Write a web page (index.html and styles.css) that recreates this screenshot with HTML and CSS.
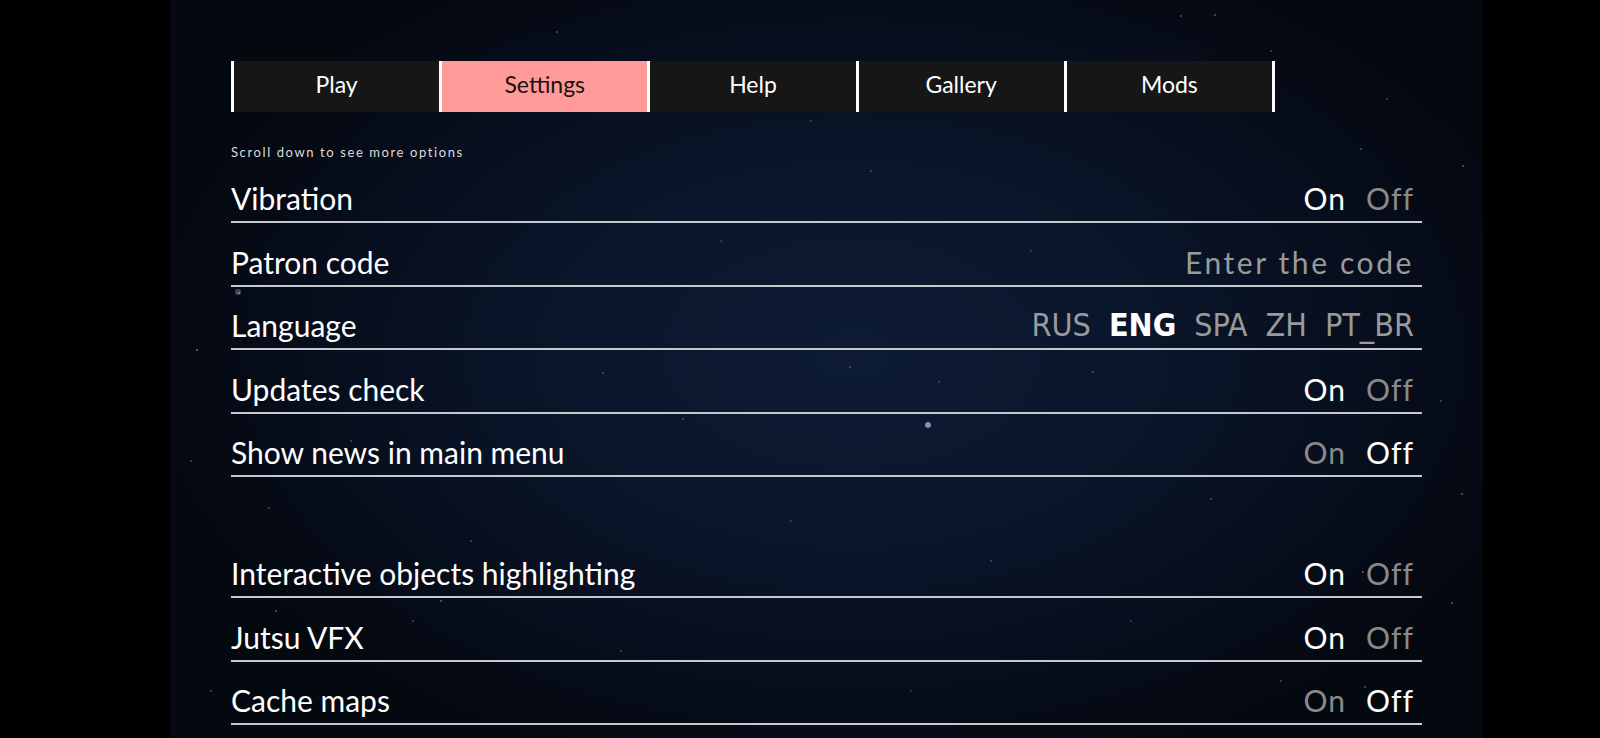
FILE: index.html
```html
<!DOCTYPE html>
<html>
<head>
    <title>Settings</title>
    <link rel="stylesheet" href="styles.css">
</head>
<body>
    <div class="panel">
        <div class="stars"></div>
        <div class="stars big"></div>

        <div class="content">
            <nav class="tabs">
                <div class="tab">Play</div>
                <div class="tab active">Settings</div>
                <div class="tab">Help</div>
                <div class="tab">Gallery</div>
                <div class="tab last">Mods</div>
            </nav>

            <p class="hint">Scroll down to see more options</p>

            <div class="row">
                <span class="label">Vibration</span>
                <span class="value"><span class="on">On</span><span class="off">Off</span></span>
            </div>
            <div class="row">
                <span class="label">Patron code</span>
                <span class="value"><span class="placeholder">Enter the code</span></span>
            </div>
            <div class="row">
                <span class="label">Language</span>
                <span class="value langs">
                    <span>RUS</span>
                    <span class="current">ENG</span>
                    <span>SPA</span>
                    <span>ZH</span>
                    <span>PT_BR</span>
                </span>
            </div>
            <div class="row">
                <span class="label">Updates check</span>
                <span class="value"><span class="on">On</span><span class="off">Off</span></span>
            </div>
            <div class="row">
                <span class="label">Show news in main menu</span>
                <span class="value"><span class="off">On</span><span class="on">Off</span></span>
            </div>

            <div class="spacer"></div>

            <div class="row">
                <span class="label">Interactive objects highlighting</span>
                <span class="value"><span class="on">On</span><span class="off">Off</span></span>
            </div>
            <div class="row">
                <span class="label">Jutsu VFX</span>
                <span class="value"><span class="on">On</span><span class="off">Off</span></span>
            </div>
            <div class="row">
                <span class="label">Cache maps</span>
                <span class="value"><span class="off">On</span><span class="on">Off</span></span>
            </div>
        </div>
    </div>
</body>
</html>
```

FILE: styles.css
```css
body {
    margin: 0;
    padding: 0;
    background-color: #000;
    font-family: Lato, "Noto Sans", sans-serif;
    color: #fff;
    height: 738px;
    overflow: hidden;
}

.panel {
    position: relative;
    margin-left: 170px;
    width: 1313px;
    height: 738px;
    overflow: hidden;
    background:
        radial-gradient(ellipse 55% 60% at 52% 48%, #0d1b33 0%, #0a152a 45%, #060c19 80%, #04080f 100%);
}

/* decorative star dust */
.stars {
    position: absolute;
    left: 0;
    top: 0;
    width: 2px;
    height: 2px;
    border-radius: 50%;
    background: transparent;
    box-shadow:
        68px 292px 0 0 rgba(200,210,230,0.55),
        26px 349px 0 0 rgba(200,210,230,0.5),
        386px 31px 0 0 rgba(200,210,230,0.35),
        1044px 14px 0 0 rgba(200,210,230,0.4),
        1010px 15px 0 0 rgba(200,210,230,0.35),
        1190px 148px 0 0 rgba(200,210,230,0.35),
        1292px 165px 0 0 rgba(200,210,230,0.4),
        1216px 98px 0 0 rgba(200,210,230,0.3),
        98px 507px 0 0 rgba(200,210,230,0.35),
        1291px 493px 0 0 rgba(200,210,230,0.45),
        1040px 498px 0 0 rgba(200,210,230,0.35),
        512px 418px 0 0 rgba(200,210,230,0.3),
        432px 372px 0 0 rgba(200,210,230,0.3),
        679px 366px 0 0 rgba(200,210,230,0.35),
        768px 381px 0 0 rgba(200,210,230,0.3),
        922px 371px 0 0 rgba(200,210,230,0.35),
        270px 600px 0 0 rgba(200,210,230,0.45),
        105px 610px 0 0 rgba(200,210,230,0.4),
        242px 620px 0 0 rgba(200,210,230,0.3),
        1192px 571px 0 0 rgba(200,210,230,0.45),
        1281px 602px 0 0 rgba(200,210,230,0.4),
        1194px 686px 0 0 rgba(200,210,230,0.4),
        700px 170px 0 0 rgba(200,210,230,0.3),
        550px 240px 0 0 rgba(200,210,230,0.25),
        860px 250px 0 0 rgba(200,210,230,0.25),
        300px 540px 0 0 rgba(200,210,230,0.3),
        620px 520px 0 0 rgba(200,210,230,0.25),
        820px 560px 0 0 rgba(200,210,230,0.3),
        960px 620px 0 0 rgba(200,210,230,0.25),
        450px 650px 0 0 rgba(200,210,230,0.3),
        740px 690px 0 0 rgba(200,210,230,0.25),
        1110px 680px 0 0 rgba(200,210,230,0.3),
        180px 440px 0 0 rgba(200,210,230,0.3),
        1160px 320px 0 0 rgba(200,210,230,0.3),
        40px 690px 0 0 rgba(200,210,230,0.35),
        20px 460px 0 0 rgba(200,210,230,0.3),
        1270px 400px 0 0 rgba(200,210,230,0.3),
        640px 120px 0 0 rgba(200,210,230,0.25),
        1100px 50px 0 0 rgba(200,210,230,0.3);
}

.stars.big {
    width: 6px;
    height: 6px;
    box-shadow:
        755px 422px 0 0 rgba(170,185,205,0.75),
        65px 289px 0 0 rgba(170,185,205,0.35);
}

.content {
    position: relative;
    padding-left: 61px;
    width: 1191px;
}

.tabs {
    display: flex;
    margin-top: 61px;
    height: 51px;
}

.tab {
    flex: 0 0 208.2px;
    box-sizing: border-box;
    border-left: 3px solid #fff;
    background-color: #161616;
    display: flex;
    align-items: center;
    justify-content: center;
    padding-bottom: 5px;
    font-size: 23px;
    color: #fff;
}

.tab.last {
    flex-basis: 211.2px;
    border-right: 3px solid #fff;
}

.tab.active {
    background-color: #ff9a98;
    color: #1b1111;
}

.hint {
    margin: 32px 0 0 0;
    height: 16px;
    line-height: 16px;
    font-size: 13px;
    letter-spacing: 1.6px;
    color: #dcdcdc;
}

.row {
    display: flex;
    justify-content: space-between;
    align-items: flex-end;
    box-sizing: border-box;
    height: 63.4px;
    padding: 0 8px 5px 0;
    border-bottom: 2px solid #c4c8cf;
}

.label {
    font-size: 30px;
    line-height: 36px;
}

.value {
    font-size: 30px;
    line-height: 36px;
    letter-spacing: 1px;
    display: flex;
    gap: 20px;
}

.on {
    color: #fff;
}

.off {
    color: #8a8a8a;
}

.placeholder {
    color: #9a9a9a;
    letter-spacing: 2.6px;
}

.langs {
    font-family: "Liberation Sans Narrow", "DejaVu Sans Condensed", Roboto, sans-serif;
    font-size: 32px;
    letter-spacing: 0;
    gap: 18px;
    color: #9a9a9a;
}

.langs .current {
    color: #fff;
    font-weight: bold;
}

.spacer {
    height: 58px;
}
```
